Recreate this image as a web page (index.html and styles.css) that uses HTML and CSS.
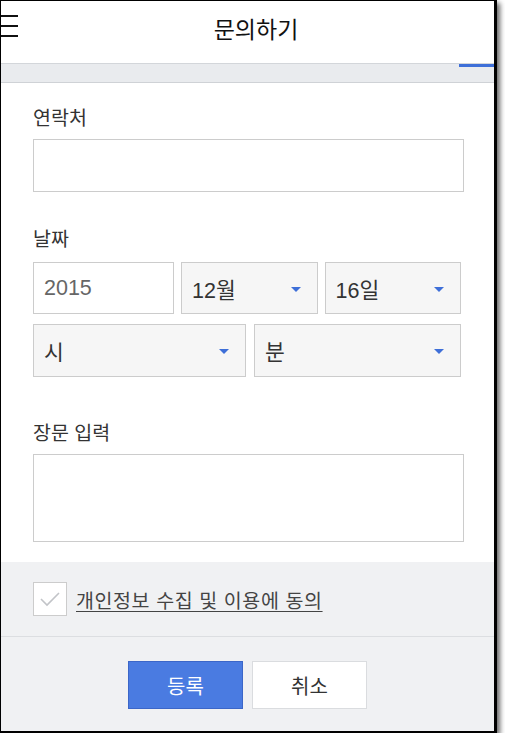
FILE: index.html
```html
<!DOCTYPE html>
<html lang="ko">
<head>
<meta charset="utf-8">
<title>문의하기</title>
<link rel="stylesheet" href="styles.css">
</head>
<body>
<div class="frame">
  <header class="topbar">
    <div class="menu" aria-label="메뉴"><span></span><span></span><span></span></div>
    <h1 class="title">문의하기</h1>
  </header>
  <div class="band"><div class="band-bar"></div></div>
  <main class="form">
    <div class="field">
      <label class="label">연락처</label>
      <div class="input"></div>
    </div>
    <div class="field field-date">
      <label class="label">날짜</label>
      <div class="row row-ymd">
        <div class="box box-text">2015</div>
        <div class="box box-select">12월<i class="caret"></i></div>
        <div class="box box-select">16일<i class="caret"></i></div>
      </div>
      <div class="row row-hm">
        <div class="box box-select">시<i class="caret"></i></div>
        <div class="box box-select">분<i class="caret"></i></div>
      </div>
    </div>
    <div class="field field-long">
      <label class="label">장문 입력</label>
      <div class="textarea"></div>
    </div>
  </main>
  <footer class="bottom">
    <div class="agree">
      <span class="check">
        <svg width="22" height="16" viewBox="0 0 22 16"><path d="M2 8 L8 14 L20 2" fill="none" stroke="#c2c4c8" stroke-width="1.6"/></svg>
      </span>
      <span class="agree-text">개인정보 수집 및 이용에 동의</span>
    </div>
    <div class="actions">
      <button class="btn btn-primary">등록</button>
      <button class="btn btn-cancel">취소</button>
    </div>
  </footer>
</div>
</body>
</html>
```
FILE: styles.css
```css
* { box-sizing: border-box; }
html, body { margin: 0; padding: 0; background: #fff; }
body {
  font-family: "Liberation Sans", "Noto Sans CJK KR", sans-serif;
  color: #333;
}
.frame {
  width: 497px;
  height: 733px;
  border-top: 1px solid #000;
  border-left: 1px solid #000;
  border-right: 3px solid #000;
  border-bottom: 2px solid #000;
  box-shadow: 3px 3px 5px rgba(0,0,0,0.6);
  display: flex;
  flex-direction: column;
  overflow: hidden;
  background: #fff;
}
.topbar {
  height: 62px;
  display: flex;
  align-items: center;
  background: #fff;
}
.menu {
  width: 17px;
  height: 62px;
  display: flex;
  flex-direction: column;
  padding-top: 14px;
  gap: 8px;
}
.menu span {
  display: block;
  width: 17px;
  height: 2px;
  background: #111;
}
.title {
  flex: 1;
  margin: 0;
  text-align: center;
  font-size: 23px;
  font-weight: 400;
  color: #111;
  line-height: 1;
  padding-bottom: 4px;
}
.band {
  height: 20px;
  background: #e9ebee;
  border-top: 1px solid #d3d6da;
  border-bottom: 1px solid #cfd2d6;
  display: flex;
  justify-content: flex-end;
}
.band-bar {
  width: 35px;
  height: 3px;
  background: #3e6fd8;
}
.form {
  padding: 24px 0 0 32px;
  background: #fff;
  height: 479px;
}
.label {
  display: block;
  font-size: 19.5px;
  line-height: 23px;
  color: #333;
  margin-bottom: 9px;
}
.input {
  width: 431px;
  height: 53px;
  border: 1px solid #ccc;
  background: #fff;
}
.field-date { margin-top: 36px; }
.field-date .label { margin-bottom: 11px; }
.row { display: flex; width: 428px; }
.row-ymd { gap: 7px; height: 52px; }
.row-hm { gap: 8px; height: 53px; margin-top: 10px; }
.box {
  border: 1px solid #ccc;
  display: flex;
  align-items: center;
  padding: 0 16px 0 10px;
  font-size: 21.5px;
  color: #333;
}
.box-text { width: 141px; background: #fff; color: #666; }
.box-select { background: #f6f6f6; justify-content: space-between; }
.row-ymd .box-select { flex: 1; }
.row-hm .box-select:first-child { width: 213px; }
.row-hm .box-select:last-child { flex: 1; }
.caret {
  width: 0;
  height: 0;
  border-left: 5px solid transparent;
  border-right: 5px solid transparent;
  border-top: 5px solid #3e6fd8;
  margin-top: 2px;
}
.field-long { margin-top: 45px; }
.textarea {
  width: 431px;
  height: 88px;
  border: 1px solid #ccc;
  background: #fff;
}
.bottom {
  flex: 1;
  background: #f0f1f3;
  display: flex;
  flex-direction: column;
}
.agree {
  height: 75px;
  display: flex;
  align-items: center;
  gap: 9px;
  padding: 0 0 0 32px;
  border-bottom: 1px solid #dcdee1;
}
.check {
  width: 34px;
  height: 34px;
  border: 1px solid #ccc;
  background: #fff;
  display: flex;
  align-items: center;
  justify-content: center;
}
.agree-text {
  font-size: 19.5px;
  color: #444;
  text-decoration: underline;
  text-underline-offset: 3px;
  letter-spacing: 0.6px;
}
.actions {
  display: flex;
  justify-content: center;
  gap: 9px;
  padding-top: 24px;
}
.btn {
  width: 115px;
  height: 48px;
  font-family: inherit;
  font-size: 20px;
  padding: 0;
  cursor: pointer;
}
.btn-primary {
  background: #4a7be1;
  border: 1px solid #3b66c8;
  color: #fff;
}
.btn-cancel {
  background: #fff;
  border: 1px solid #dadcdf;
  color: #333;
}
```
